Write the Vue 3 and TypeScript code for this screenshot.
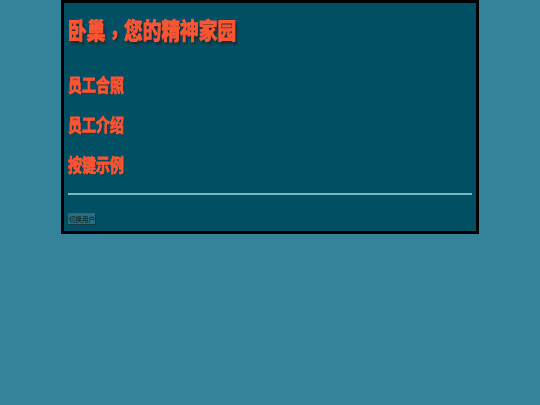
<script setup lang="ts">
const links: string[] = ['员工合照', '员工介绍', '按键示例']
</script>

<template>
  <div class="page">
    <main class="panel">
      <h1 class="title">卧巢<span class="comma">，</span>您的精神家园</h1>
      <nav class="links">
        <a v-for="link in links" :key="link" class="link" href="#">{{ link }}</a>
      </nav>
      <hr class="rule" />
      <button class="switch" type="button">切换用户</button>
    </main>
  </div>
</template>

<style>
html, body { margin: 0; background: #35839a; }
</style>

<style scoped>
.page {
  min-height: 405px;
  background: #35839a;
  font-family: "Noto Sans CJK SC", "Liberation Sans", sans-serif;
}
.panel {
  box-sizing: border-box;
  width: 418px;
  height: 234px;
  margin-left: 61px;
  padding: 0 4px;
  background: #004f63;
  border: 3px solid #000;
  display: flex;
  flex-direction: column;
  align-items: stretch;
}
.title {
  margin: 12px 0 0;
  font-size: 18.7px;
  line-height: 29px;
  font-weight: 700;
  color: #ff5533;
  -webkit-text-stroke: 0.8px #ff5533;
  text-shadow: 2px 2px 2px #20272b;
  transform: scaleY(1.2);
  filter: blur(0.35px);
}
.comma {
  font-family: "Noto Sans CJK TC", sans-serif;
  vertical-align: -3px;
}
.links {
  display: flex;
  flex-direction: column;
  gap: 19px;
  margin-top: 27px;
}
.link {
  font-size: 14px;
  line-height: 21px;
  font-weight: 700;
  color: #ff5533;
  -webkit-text-stroke: 0.7px #ff5533;
  text-shadow: 1px 1px 1px #20373f;
  text-decoration: none;
  transform: scaleY(1.3);
  filter: blur(0.4px);
}
.rule {
  width: 100%;
  box-sizing: border-box;
  height: 2px;
  border: 0;
  background: #7fb4c2;
  margin: 18px 0 0;
  filter: blur(0.3px);
}
.switch {
  align-self: flex-start;
  margin-top: 18px;
  width: 28px;
  height: 12px;
  padding: 0;
  box-sizing: border-box;
  white-space: nowrap;
  font-family: inherit;
  font-size: 6.5px;
  line-height: 10px;
  color: #061318;
  background: #2a7085;
  border: 1px solid #0f3642;
  border-top-color: #2a6a7e;
  border-left-color: #2a6a7e;
  border-radius: 1px;
}
</style>
